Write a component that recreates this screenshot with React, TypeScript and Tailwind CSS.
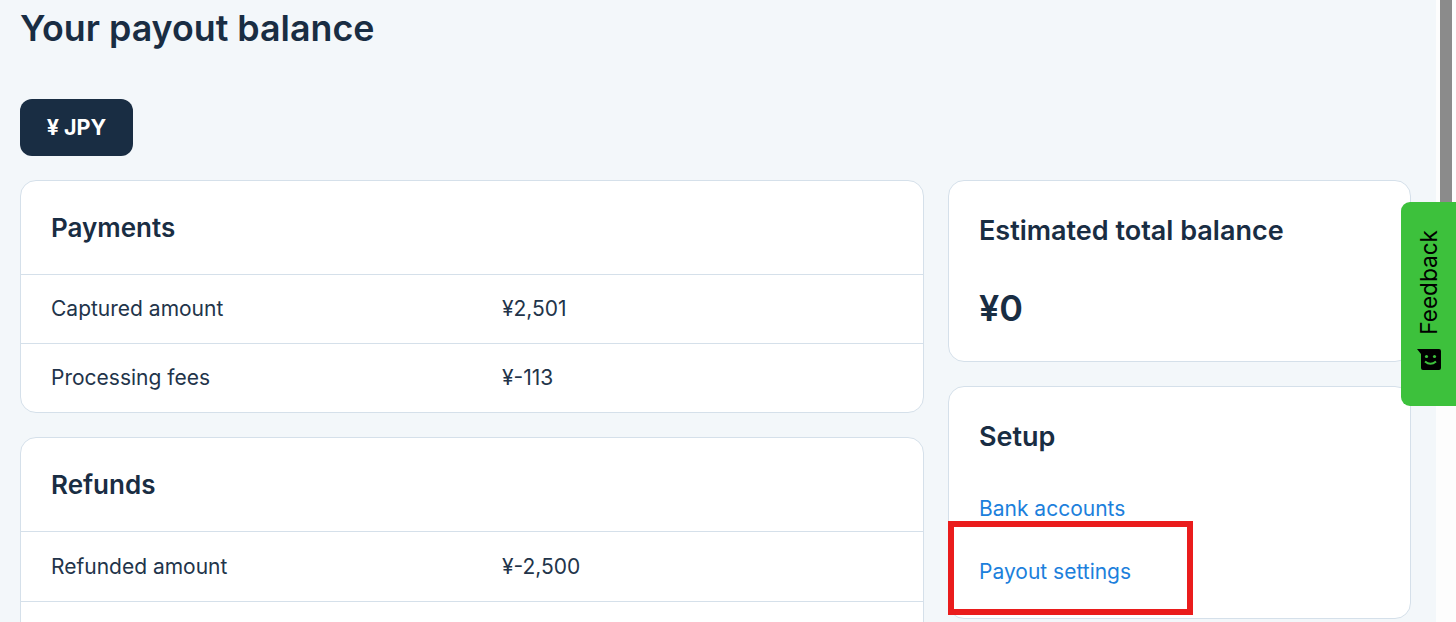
import { ReactNode } from "react";

const PAYMENTS = [
  { label: "Captured amount", value: "¥2,501", height: "h-[69px]" },
  { label: "Processing fees", value: "¥-113", height: "h-[69px]" },
];

const REFUNDS = [
  { label: "Refunded amount", value: "¥-2,500", height: "h-[70px]" },
  { label: "", value: "", height: "h-[69px]" },
];

function Card({ className, children }: { className: string; children: ReactNode }) {
  return (
    <section className={`rounded-[16px] border border-[#d5e0ea] bg-white ${className}`}>
      {children}
    </section>
  );
}

function BalanceCard({
  title,
  rows,
}: {
  title: string;
  rows: { label: string; value: string; height: string }[];
}) {
  return (
    <Card className="overflow-hidden">
      <h2 className="flex h-[93px] items-center px-[30px] text-[26px] font-semibold text-[#192d43]">
        {title}
      </h2>
      {rows.map((r, i) => (
        <div
          key={i}
          className={`flex items-center border-t border-[#d5e0ea] px-[30px] text-[21px] text-[#22344a] ${r.height}`}
        >
          <span className="w-[451px]">{r.label}</span>
          <span>{r.value}</span>
        </div>
      ))}
    </Card>
  );
}

function FeedbackTab() {
  return (
    <div className="absolute right-0 top-[202px] flex h-[204px] w-[55px] flex-col items-center rounded-l-[9px] bg-[#3dc13c]">
      <span className="mt-[28px] text-[22.6px] leading-[26px] text-black [transform:rotate(180deg)] [writing-mode:vertical-rl]">
        Feedback
      </span>
      <svg className="mt-[14px]" width="24" height="21" viewBox="0 0 24 21">
        <path d="M0 0h22a2 2 0 0 1 2 2v17a2 2 0 0 1-2 2H6a2 2 0 0 1-2-2V5z" fill="#000" />
        <circle cx="9.5" cy="7.5" r="1.6" fill="#3dc13c" />
        <circle cx="17.5" cy="7.5" r="1.6" fill="#3dc13c" />
        <path d="M8 12.5q5.5 4.500 11 0" fill="none" stroke="#3dc13c" strokeWidth="2" />
      </svg>
    </div>
  );
}

export default function App() {
  return (
    <div className="relative flex h-[622px] w-[1456px] overflow-hidden bg-[#f3f7fa] font-['Inter',sans-serif]">
      <main className="w-[1436px] px-5">
        <h1 className="flex h-[58px] items-center text-[35.8px] font-semibold text-[#192d43]">
          Your payout balance
        </h1>
        <button
          type="button"
          className="mt-[41px] flex h-[57px] w-[113px] items-center justify-center rounded-[12px] bg-[#192d43] text-[21.5px] font-bold text-white"
        >
          ¥ JPY
        </button>
        <div className="mt-6 flex items-start gap-6">
          <div className="flex w-[904px] shrink-0 flex-col gap-6">
            <BalanceCard title="Payments" rows={PAYMENTS} />
            <BalanceCard title="Refunds" rows={REFUNDS} />
          </div>
          <div className="flex w-[463px] shrink-0 flex-col gap-6">
            <Card className="h-[182px] px-[30px] pt-[32px]">
              <h2 className="text-[27px] font-semibold leading-[36px] text-[#192d43]">
                Estimated total balance
              </h2>
              <p className="mt-[36px] text-[36px] font-semibold leading-[46px] text-[#192d43]">¥0</p>
            </Card>
            <Card className="h-[233px] px-[30px] pt-[32px]">
              <h2 className="text-[27px] font-semibold leading-[36px] text-[#192d43]">Setup</h2>
              <a className="mt-[39px] block text-[21px] leading-[30px] text-[#1c80dc]">Bank accounts</a>
              <a className="mt-[33px] block text-[21px] leading-[30px] text-[#1c80dc]">Payout settings</a>
            </Card>
          </div>
        </div>
      </main>
      <aside className="flex w-5 justify-center bg-[#fdfdfd]">
        <div className="h-[202px] w-3 bg-[#8b8b8b]" />
      </aside>
      <div className="absolute left-[948px] top-[521px] h-[94px] w-[245px] border-[6px] border-[#ea1c1c]" />
      <FeedbackTab />
    </div>
  );
}
